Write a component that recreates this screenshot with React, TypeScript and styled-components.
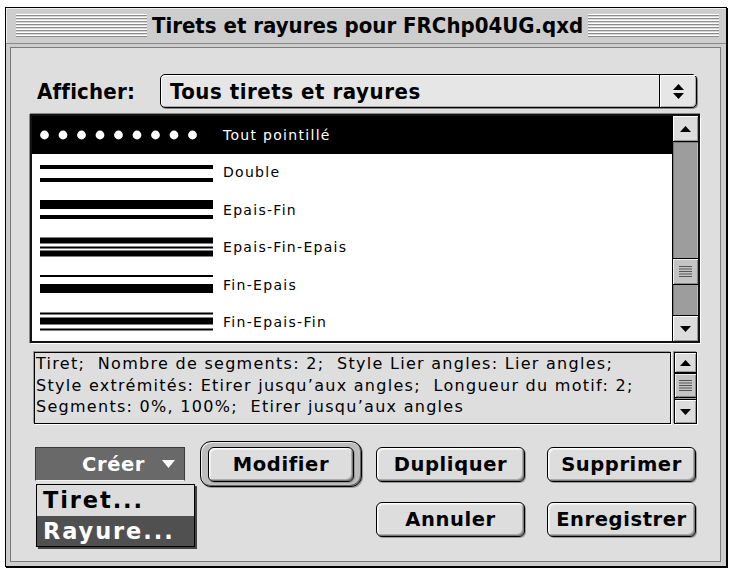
import styled, { createGlobalStyle } from 'styled-components';

const GlobalStyle = createGlobalStyle`
  html, body {
    margin: 0;
    padding: 0;
    background: #fff;
  }
  body {
    width: 734px;
    height: 568px;
    overflow: hidden;
  }
`;

const charcoal = `"DejaVu Sans Condensed", "DejaVu Sans", sans-serif`;
const charcoalWide = `"DejaVu Sans", sans-serif`;
const geneva = `"DejaVu Sans", Verdana, sans-serif`;

const Window = styled.div`
  margin: 7px 0 0 5px;
  width: 720px;
  height: 558px;
  border: 1px solid #000;
  box-shadow: 1px 1px 0 #000;
  background: #cdcdcd;
  display: flex;
  flex-direction: column;
`;

const TitleBar = styled.div`
  height: 35px;
  display: flex;
  align-items: center;
  padding: 0 7px 0 10px;
  border-bottom: 1px solid #8a8a8a;
  box-shadow: inset 1px 1px 0 #eee;
`;

const Stripes = styled.div`
  flex: 1;
  height: 23px;
  background: repeating-linear-gradient(
    to bottom,
    #fff 0 1px,
    #8c8c8c 1px 2px,
    #d8d8d8 2px 3px
  );
`;

const Title = styled.div`
  margin: 0 5px;
  font-family: ${charcoal};
  font-weight: bold;
  font-size: 22px;
  color: #000;
  white-space: nowrap;
`;

const Content = styled.div`
  margin: 3px 5px 4px 4px;
  flex: 1;
  border: 1px solid #7a7a7a;
  background: #dedede;
  padding: 26px 0 0 19px;
  display: flex;
  flex-direction: column;
`;

const ShowRow = styled.div`
  display: flex;
  align-items: center;
  height: 34px;
  padding-left: 7px;
`;

const Label = styled.div`
  width: 123px;
  font-family: ${charcoal};
  font-weight: bold;
  font-size: 22px;
  letter-spacing: 0.2px;
`;

const Popup = styled.div`
  width: 537px;
  height: 34px;
  box-sizing: border-box;
  border: 1px solid #000;
  border-radius: 5px;
  background: #e6e6e6;
  box-shadow: inset 1px 1px 0 #fff, inset -1px -1px 0 #aaa, 1px 1px 0 #888;
  display: flex;
  align-items: stretch;
`;

const PopupText = styled.div`
  flex: 1;
  padding-left: 9px;
  display: flex;
  align-items: center;
  font-family: ${charcoal};
  font-weight: bold;
  font-size: 22px;
  letter-spacing: 0.55px;
`;

const PopupArrows = styled.div`
  width: 36px;
  border-left: 1px solid #000;
  display: flex;
  align-items: center;
  justify-content: center;
  box-shadow: inset 1px 1px 0 #fff;
`;

const ListBox = styled.div`
  margin-top: 6px;
  width: 670px;
  height: 229px;
  box-sizing: border-box;
  border: 2px solid #111;
  box-shadow: 0 -1px 0 #888, -1px 0 0 #888, 1px 1px 0 #fff;
  background: #fff;
  display: flex;
`;

const Rows = styled.div`
  flex: 1;
  display: flex;
  flex-direction: column;
`;

const Row = styled.div<{ $selected?: boolean }>`
  height: 37.5px;
  display: flex;
  align-items: center;
  padding-left: 8px;
  gap: 10px;
  background: ${(p) => (p.$selected ? '#000' : '#fff')};
  color: ${(p) => (p.$selected ? '#fff' : '#000')};
  font-family: ${geneva};
  font-size: 14px;
  letter-spacing: 1.3px;
`;

const ScrollBar = styled.div<{ $width: number }>`
  width: ${(p) => p.$width}px;
  box-sizing: border-box;
  border-left: 1px solid #000;
  display: flex;
  flex-direction: column;
  background: #9d9d9d;
`;

const ArrowButton = styled.div<{ $height: number; $down?: boolean }>`
  height: ${(p) => p.$height}px;
  flex-shrink: 0;
  box-sizing: border-box;
  background: #dcdcdc;
  ${(p) => (p.$down ? 'border-top: 1px solid #000;' : 'border-bottom: 1px solid #000;')}
  box-shadow: inset 1px 1px 0 #fff, inset -1px -1px 0 #999;
  display: flex;
  align-items: center;
  justify-content: center;
`;

const Track = styled.div`
  flex: 1;
  box-shadow: inset 1px 1px 0 #777, inset -1px 0 0 #bbb;
  display: flex;
  flex-direction: column;
`;

const Thumb = styled.div<{ $height: number }>`
  height: ${(p) => p.$height}px;
  box-sizing: border-box;
  border-top: 1px solid #000;
  border-bottom: 1px solid #000;
  background: #c4c4c4;
  box-shadow: inset 1px 1px 0 #eee, inset -1px -1px 0 #888;
  display: flex;
  align-items: center;
  justify-content: center;
`;

const DescRow = styled.div`
  margin: 9px 0 0 4px;
  display: flex;
  gap: 3px;
  height: 72px;
`;

const DescBox = styled.div`
  width: 637px;
  box-sizing: border-box;
  border: 1px solid #000;
  box-shadow: -1px -1px 0 #999, 1px 1px 0 #fff;
  padding: 0 0 0 1px;
  font-family: ${geneva};
  font-size: 16px;
  letter-spacing: 1.28px;
  line-height: 21.5px;
  white-space: pre;
  overflow: hidden;
  color: #000;
`;

const DescScroll = styled.div`
  width: 23px;
  box-sizing: border-box;
  border: 1px solid #000;
  box-shadow: -1px -1px 0 #999, 1px 1px 0 #fff;
  display: flex;
  flex-direction: column;
  background: #9d9d9d;
`;

const ButtonRow = styled.div<{ $top: number; $left: number; $height: number }>`
  margin: ${(p) => p.$top}px 0 0 ${(p) => p.$left}px;
  height: ${(p) => p.$height}px;
  display: flex;
  align-items: center;
`;

const Button = styled.div<{ $width?: number; $gap?: number }>`
  width: ${(p) => p.$width ?? 149}px;
  height: 35px;
  margin-left: ${(p) => p.$gap ?? 0}px;
  box-sizing: border-box;
  border: 1px solid #000;
  border-radius: 6px;
  background: #dddddd;
  box-shadow: inset 1px 1px 0 #fff, inset 2px 2px 0 #eee, inset -1px -1px 0 #777,
    inset -2px -2px 0 #aaa, 1px 1px 0 #999;
  display: flex;
  align-items: center;
  justify-content: center;
  font-family: ${charcoalWide};
  font-weight: bold;
  font-size: 19.5px;
  letter-spacing: 0.6px;
  color: #000;
`;

const DefaultRing = styled.div<{ $gap: number }>`
  margin-left: ${(p) => p.$gap}px;
  height: 46px;
  box-sizing: border-box;
  padding: 5px 7px;
  border: 1px solid #000;
  border-radius: 11px;
  background: #bdbdbd;
  box-shadow: inset 1px 1px 0 #eee, inset -1px -1px 0 #666, 1px 1px 0 #999;
  display: flex;
  align-items: center;
`;

const CreateWrap = styled.div`
  position: relative;
`;

const CreatePopup = styled.div`
  width: 150px;
  height: 34px;
  box-sizing: border-box;
  background: #696969;
  border: 1px solid #3a3a3a;
  border-bottom: 1px solid #f4f4f4;
  display: flex;
  align-items: center;
  justify-content: flex-end;
  gap: 17px;
  padding-right: 9px;
  font-family: ${charcoalWide};
  font-weight: bold;
  font-size: 19.5px;
  letter-spacing: 0.6px;
  color: #fff;
`;

const Menu = styled.div`
  position: absolute;
  left: 1px;
  top: 37px;
  width: 159px;
  box-sizing: border-box;
  border: 1px solid #000;
  background: #dcdcdc;
  box-shadow: 2px 2px 0 #444;
  z-index: 2;
`;

const MenuItem = styled.div<{ $active?: boolean }>`
  height: 30.5px;
  display: flex;
  align-items: center;
  padding-left: 6px;
  background: ${(p) => (p.$active ? '#505050' : 'transparent')};
  color: ${(p) => (p.$active ? '#fff' : '#000')};
  font-family: ${charcoalWide};
  font-weight: bold;
  font-size: 22.5px;
  letter-spacing: 1.9px;
`;

type Bar = [number, number];

interface LineStyle {
  name: string;
  dots?: boolean;
  bars: Bar[];
}

const LINE_STYLES: LineStyle[] = [
  { name: 'Tout pointillé', dots: true, bars: [] },
  { name: 'Double', bars: [[11, 4], [24, 4]] },
  { name: 'Epais-Fin', bars: [[9, 9], [24, 4]] },
  { name: 'Epais-Fin-Epais', bars: [[8.5, 6], [17.5, 2], [21.5, 6]] },
  { name: 'Fin-Epais', bars: [[9, 2], [18, 9]] },
  { name: 'Fin-Epais-Fin', bars: [[8.5, 2], [13.5, 7], [24.5, 2]] },
];

function Sample({ style }: { style: LineStyle }) {
  return (
    <svg width="173" height="37.5" viewBox="0 0 173 37.5">
      {style.dots
        ? Array.from({ length: 9 }, (_, i) => (
            <circle key={i} cx={4.5 + i * 18.5} cy={19} r={4.4} fill="#fff" />
          ))
        : style.bars.map(([y, h], i) => (
            <rect key={i} x={0} y={y} width={173} height={h} fill="#000" />
          ))}
    </svg>
  );
}

function Arrow({ down }: { down?: boolean }) {
  return (
    <svg width="11" height="6" viewBox="0 0 11 6">
      <polygon points={down ? '0,0 11,0 5.5,6' : '0,6 11,6 5.5,0'} fill="#000" />
    </svg>
  );
}

function Grip() {
  return (
    <svg width="13" height="11" viewBox="0 0 13 11">
      {[0, 2.5, 5, 7.5, 10].map((y) => (
        <rect key={y} x={0} y={y} width={13} height={1} fill="#555" />
      ))}
    </svg>
  );
}

function Scroll({ up, down, thumbTop, thumbHeight }: { up: number; down: number; thumbTop: number; thumbHeight: number }) {
  return (
    <>
      <ArrowButton $height={up}>
        <Arrow />
      </ArrowButton>
      <Track>
        <div style={{ height: thumbTop }} />
        <Thumb $height={thumbHeight}>
          <Grip />
        </Thumb>
      </Track>
      <ArrowButton $height={down} $down>
        <Arrow down />
      </ArrowButton>
    </>
  );
}

const DESCRIPTION = [
  'Tiret;  Nombre de segments: 2;  Style Lier angles: Lier angles;',
  'Style extrémités: Etirer jusqu’aux angles;  Longueur du motif: 2;',
  'Segments: 0%, 100%;  Etirer jusqu’aux angles',
].join('\n');

export default function App() {
  return (
    <>
      <GlobalStyle />
      <Window>
        <TitleBar>
          <Stripes />
          <Title>Tirets et rayures pour FRChp04UG.qxd</Title>
          <Stripes />
        </TitleBar>
        <Content>
          <ShowRow>
            <Label>Afficher:</Label>
            <Popup>
              <PopupText>Tous tirets et rayures</PopupText>
              <PopupArrows>
                <svg width="11" height="15" viewBox="0 0 11 15">
                  <polygon points="0,6 11,6 5.5,0" fill="#000" />
                  <polygon points="0,9 11,9 5.5,15" fill="#000" />
                </svg>
              </PopupArrows>
            </Popup>
          </ShowRow>

          <ListBox>
            <Rows>
              {LINE_STYLES.map((s, i) => (
                <Row key={s.name} $selected={i === 0}>
                  <Sample style={s} />
                  <span>{s.name}</span>
                </Row>
              ))}
            </Rows>
            <ScrollBar $width={26}>
              <Scroll up={26} down={26} thumbTop={116} thumbHeight={27} />
            </ScrollBar>
          </ListBox>

          <DescRow>
            <DescBox>{DESCRIPTION}</DescBox>
            <DescScroll>
              <Scroll up={20} down={24} thumbTop={0} thumbHeight={25} />
            </DescScroll>
          </DescRow>

          <ButtonRow $top={17} $left={5} $height={46}>
            <CreateWrap>
              <CreatePopup>
                <span>Créer</span>
                <svg width="13" height="8" viewBox="0 0 13 8">
                  <polygon points="0,0 13,0 6.5,8" fill="#fff" />
                </svg>
              </CreatePopup>
              <Menu>
                <MenuItem>Tiret...</MenuItem>
                <MenuItem $active>Rayure...</MenuItem>
              </Menu>
            </CreateWrap>
            <DefaultRing $gap={15}>
              <Button $width={146}>Modifier</Button>
            </DefaultRing>
            <Button $gap={14}>Dupliquer</Button>
            <Button $gap={22}>Supprimer</Button>
          </ButtonRow>

          <ButtonRow $top={15} $left={346} $height={35}>
            <Button>Annuler</Button>
            <Button $gap={22}>Enregistrer</Button>
          </ButtonRow>
        </Content>
      </Window>
    </>
  );
}
